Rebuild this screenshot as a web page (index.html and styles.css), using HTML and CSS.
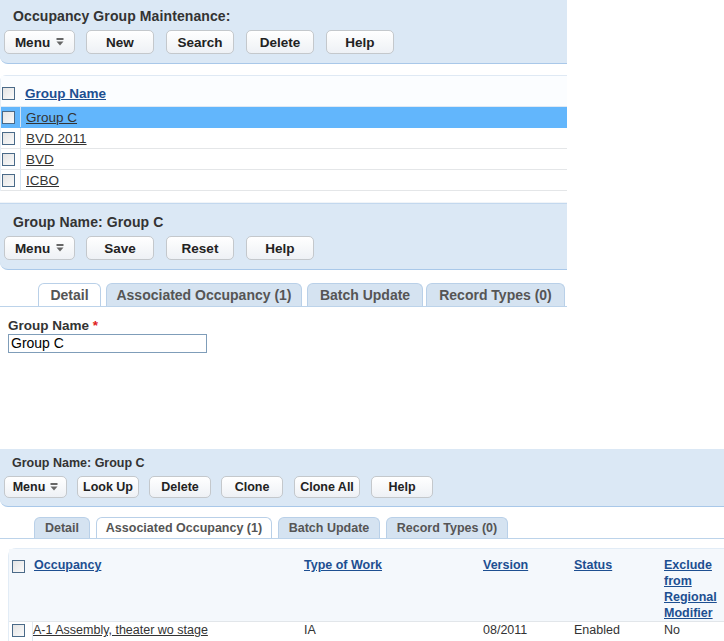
FILE: index.html
```html
<!DOCTYPE html>
<html>
<head>
<meta charset="utf-8">
<link rel="stylesheet" href="styles.css">
</head>
<body>
<div class="upper">
  <section class="panel p1">
    <div class="title">Occupancy Group Maintenance:</div>
    <div class="btns">
      <button class="btn menu">Menu <svg width="8" height="9" viewBox="0 0 8 9"><rect x="0.5" y="0" width="7" height="2" fill="#666"/><path d="M0.5 3.5 H7.5 L4 7.5 Z" fill="#666"/></svg></button>
      <button class="btn">New</button>
      <button class="btn">Search</button>
      <button class="btn">Delete</button>
      <button class="btn">Help</button>
    </div>
  </section>

  <div class="list">
    <div class="lrow head">
      <span class="cb"></span>
      <span class="cell"><a class="hlink">Group Name</a></span>
    </div>
    <div class="lrow sel">
      <span class="cb"></span>
      <span class="cell"><a class="dlink">Group C</a></span>
    </div>
    <div class="lrow">
      <span class="cb"></span>
      <span class="cell"><a class="dlink">BVD 2011</a></span>
    </div>
    <div class="lrow">
      <span class="cb"></span>
      <span class="cell"><a class="dlink">BVD</a></span>
    </div>
    <div class="lrow">
      <span class="cb"></span>
      <span class="cell"><a class="dlink">ICBO</a></span>
    </div>
  </div>

  <section class="panel p2">
    <div class="title">Group Name: Group C</div>
    <div class="btns">
      <button class="btn menu">Menu <svg width="8" height="9" viewBox="0 0 8 9"><rect x="0.5" y="0" width="7" height="2" fill="#666"/><path d="M0.5 3.5 H7.5 L4 7.5 Z" fill="#666"/></svg></button>
      <button class="btn">Save</button>
      <button class="btn">Reset</button>
      <button class="btn">Help</button>
    </div>
  </section>

  <nav class="tabs t1">
    <span class="tab active">Detail</span>
    <span class="tab">Associated Occupancy (1)</span>
    <span class="tab">Batch Update</span>
    <span class="tab">Record Types (0)</span>
  </nav>

  <div class="form">
    <div class="label">Group Name <span class="req">*</span></div>
    <div class="input">Group C</div>
  </div>
</div>

<div class="lower">
  <section class="panel p3">
    <div class="title">Group Name: Group C</div>
    <div class="btns">
      <button class="btn menu">Menu <svg width="8" height="9" viewBox="0 0 8 9"><rect x="0.5" y="0" width="7" height="2" fill="#666"/><path d="M0.5 3.5 H7.5 L4 7.5 Z" fill="#666"/></svg></button>
      <button class="btn">Look Up</button>
      <button class="btn">Delete</button>
      <button class="btn">Clone</button>
      <button class="btn wide">Clone All</button>
      <button class="btn">Help</button>
    </div>
  </section>

  <nav class="tabs t2">
    <span class="tab">Detail</span>
    <span class="tab active">Associated Occupancy (1)</span>
    <span class="tab">Batch Update</span>
    <span class="tab">Record Types (0)</span>
  </nav>

  <div class="grid">
    <div class="grow ghead">
      <span class="gc c0"><span class="cb"></span></span>
      <span class="gc"><a class="hlink">Occupancy</a></span>
      <span class="gc"><a class="hlink">Type of Work</a></span>
      <span class="gc"><a class="hlink">Version</a></span>
      <span class="gc"><a class="hlink">Status</a></span>
      <span class="gc"><a class="hlink">Exclude from Regional Modifier</a></span>
    </div>
    <div class="grow gdata">
      <span class="gc c0"><span class="cb"></span></span>
      <span class="gc"><a class="dlink">A-1 Assembly, theater wo stage</a></span>
      <span class="gc">IA</span>
      <span class="gc">08/2011</span>
      <span class="gc">Enabled</span>
      <span class="gc">No</span>
    </div>
  </div>
</div>
</body>
</html>
```

FILE: styles.css
```css
* { box-sizing: border-box; }
body {
  margin: 0;
  font-family: "Liberation Sans", Arial, sans-serif;
  color: #333;
  background: #fff;
  width: 724px;
  height: 641px;
  overflow: hidden;
}
.upper { width: 567px; }

.panel {
  background: #dbe8f5;
  border-bottom: 1px solid #a9c8e9;
  border-bottom-left-radius: 8px;
}
.title {
  font-weight: bold;
  color: #333;
}
.btns { display: flex; }
.btn {
  font-family: "Liberation Sans", Arial, sans-serif;
  font-weight: bold;
  color: #222;
  background: linear-gradient(#ffffff, #eef1f5);
  border: 1px solid #c4c8cc;
  border-radius: 5px;
  padding: 0;
  display: flex;
  align-items: center;
  justify-content: center;
  gap: 6px;
}
.btn svg { display: block; }

.p1 { padding: 8px 0 9px 4px; }
.p1 .title, .p2 .title { font-size: 14px; line-height: 16px; padding-left: 9px; letter-spacing: 0.1px; }
.p1 .btns, .p2 .btns { margin-top: 6px; gap: 12px; }
.p1 .btn, .p2 .btn { width: 68px; height: 24px; font-size: 13.5px; }
.p1 .btn.menu, .p2 .btn.menu { width: 71px; margin-right: -1px; }

.list {
  margin-top: 11px;
  border-top: 1px solid #dfe9f4;
  border-left: 1px solid #e6eef6;
  border-top-left-radius: 6px;
  height: 116px;
}
.lrow {
  display: flex;
  align-items: center;
  height: 21px;
  border-bottom: 1px solid #e4e6e8;
}
.lrow.head {
  height: 31px;
  background: #fbfdff;
  border-bottom: 1px solid #dfe9f4;
  padding-top: 4px;
}
.lrow.sel { background: #62b6fc; border-bottom-color: #62b6fc; }
.lrow .cb { margin-left: 1px; }
.lrow .cell {
  margin-left: 5px;
  height: 100%;
  display: flex;
  align-items: center;
  padding-left: 5px;
  border-left: 1px solid #d5e4f3;
  font-size: 13.5px;
}
.lrow.head .cell { border-left: none; }
.cb {
  display: inline-block;
  width: 13px;
  height: 13px;
  border: 1px solid #4a6a88;
  background: linear-gradient(135deg, #e4e4e4, #fafafa);
  flex: none;
}
.hlink {
  color: #1d4f91;
  font-weight: bold;
  text-decoration: underline;
}
.dlink {
  color: #333;
  text-decoration: underline;
}

.p2 {
  margin-top: 12px;
  border-top: 1px solid #c3d8ee;
  box-shadow: 0 -1px 0 #f0f4f8;
  padding: 10px 0 9px 4px;
}

.tabs {
  display: flex;
  border-bottom: 1px solid #bcd3ea;
}
.tab {
  font-weight: bold;
  color: #555;
  background: #d5e3f1;
  border: 1px solid #b9d0e8;
  border-bottom: none;
  border-radius: 6px 6px 0 0;
  display: flex;
  align-items: center;
  justify-content: center;
}
.tab.active { background: #fff; }
.t1 { margin-top: 13px; padding-left: 38px; gap: 5px; }
.t1 .tab { height: 23px; font-size: 14px; }
.t1 .tab:nth-child(1) { width: 63px; }
.t1 .tab:nth-child(2) { width: 196px; }
.t1 .tab:nth-child(3) { width: 116px; margin-right: -2px; }
.t1 .tab:nth-child(4) { width: 139px; }

.form { padding: 11px 0 0 8px; }
.label { font-size: 13.5px; font-weight: bold; line-height: 15px; color: #333; }
.req { color: #e02020; }
.input {
  margin-top: 1px;
  width: 199px;
  height: 19px;
  border: 1px solid #7f9db9;
  font-size: 14px;
  line-height: 17px;
  padding-left: 2px;
  color: #000;
}

.lower { margin-top: 96px; }
.p3 {
  border-bottom-left-radius: 8px;
  padding: 6px 0 8px 4px;
}
.p3 .title { font-size: 12.5px; line-height: 16px; padding-left: 8px; }
.p3 .btns { margin-top: 5px; gap: 10px; }
.p3 .btn { width: 62px; height: 22px; font-size: 12.5px; gap: 5px; }
.p3 .btn.menu { width: 63px; }
.p3 .btn.wide { width: 66px; margin-left: 1px; margin-right: 1px; }

.t2 { margin-top: 10px; padding-left: 34px; gap: 6px; }
.t2 .tab { height: 21px; font-size: 12.5px; }
.t2 .tab:nth-child(1) { width: 56px; }
.t2 .tab:nth-child(2) { width: 176px; }
.t2 .tab:nth-child(3) { width: 102px; }
.t2 .tab:nth-child(4) { width: 122px; }

.grid {
  margin: 9px 0 0 8px;
  border-top: 1px solid #e2ecf6;
  border-left: 1px solid #e2ecf6;
  border-top-left-radius: 8px;
  font-size: 12.5px;
}
.grow {
  display: grid;
  grid-template-columns: 24px 271px 179px 91px 90px 60px;
}
.ghead {
  background: #f4f8fc;
  padding-top: 8px;
  height: 73px;
  line-height: 16px;
  border-bottom: 1px solid #e2e6ea;
}
.gdata {
  height: 19px;
  line-height: 17px;
  color: #333;
}
.gc.c0 { padding-left: 3px; }
.ghead .c0 { padding-top: 3px; }
.gdata .c0 { padding-top: 2px; border-right: 1px solid #e0e8f0; }
.ghead .gc:nth-child(2) { padding-left: 1px; }
```
